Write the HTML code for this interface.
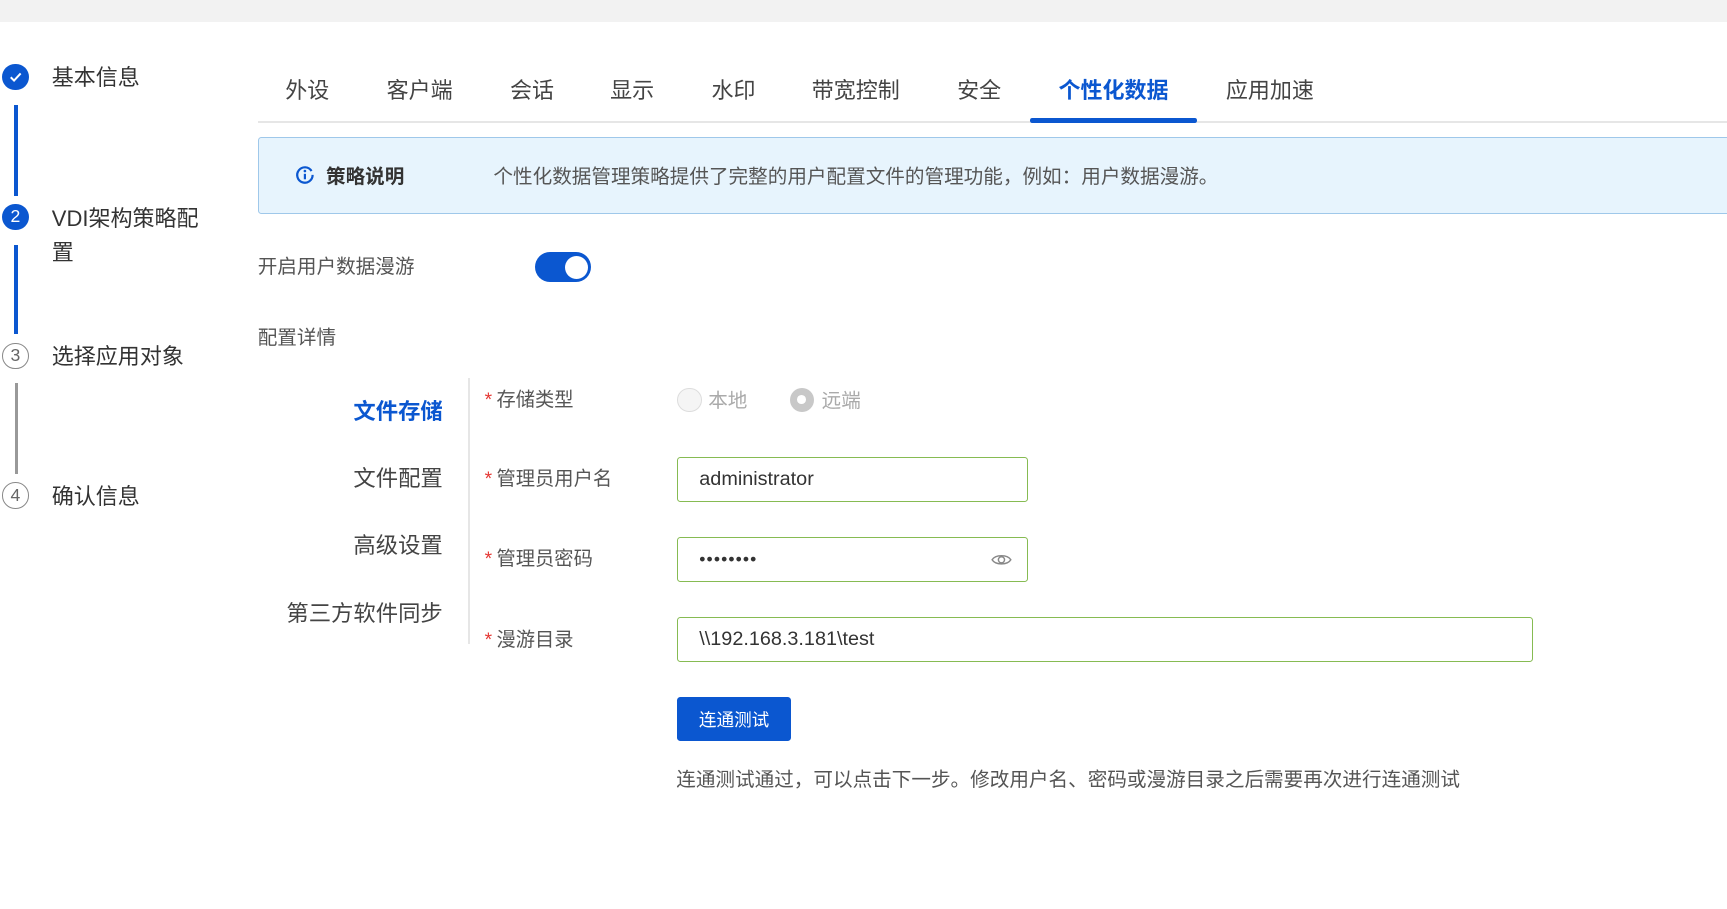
<!DOCTYPE html>
<html><head><meta charset="utf-8"><style>
html,body{margin:0;padding:0;background:#fff;overflow:hidden}
body{width:1568px;height:825px;zoom:1.10140;position:relative;font-family:"Liberation Sans","Noto Sans CJK SC",sans-serif;color:#333}
.a{position:absolute;white-space:nowrap}
.top{left:0;top:0;width:1568px;height:20px;background:#f2f2f2}
.circ{width:24px;height:24px;border-radius:50%;left:2px;box-sizing:border-box;display:flex;align-items:center;justify-content:center;font-size:16px}
.fill{background:#0b57d0;color:#fff}
.out{border:1.5px solid #888;color:#666}
.sl{font-size:20px;color:#333;left:47px;line-height:30px}
.vl{left:13px;width:3px}
.tab{font-size:20px;color:#444;top:69px;line-height:28px}
.f17{font-size:17.8px;color:#555;line-height:24px}
.nav{font-size:20.3px;color:#444;right:1166px;line-height:28px;text-align:right}
.lab{font-size:17.5px;color:#555;left:440px;line-height:24px}
.lab b{color:#e53935;font-weight:normal;margin-right:4px}
.inp{border:1px solid #86bb52;border-radius:3px;box-sizing:border-box;font-size:18px;color:#333;padding-left:19px;display:flex;align-items:center}
</style></head><body>
<div class="a top"></div>

<div class="a circ fill" style="top:58px"><svg width="14" height="14" viewBox="0 0 14 14"><path d="M2.5 7.5l3 3 6-6.5" stroke="#fff" stroke-width="1.8" fill="none"/></svg></div>
<div class="a sl" style="top:55px">基本信息</div>
<div class="a vl" style="top:95px;height:83px;background:#0b57d0"></div>
<div class="a circ fill" style="top:185px">2</div>
<div class="a sl" style="top:183px">VDI架构策略配</div>
<div class="a sl" style="top:214px">置</div>
<div class="a vl" style="top:222px;height:81px;background:#0b57d0"></div>
<div class="a circ out" style="top:311px">3</div>
<div class="a sl" style="top:309px">选择应用对象</div>
<div class="a vl" style="top:348px;height:82px;background:#999;width:2px;left:14px"></div>
<div class="a circ out" style="top:438px">4</div>
<div class="a sl" style="top:436px">确认信息</div>

<div class="a tab" style="left:259px">外设</div>
<div class="a tab" style="left:351px">客户端</div>
<div class="a tab" style="left:463px">会话</div>
<div class="a tab" style="left:554px">显示</div>
<div class="a tab" style="left:646px">水印</div>
<div class="a tab" style="left:737px">带宽控制</div>
<div class="a tab" style="left:869px">安全</div>
<div class="a tab" style="left:961px;color:#0b57d0;font-weight:bold">个性化数据</div>
<div class="a tab" style="left:1113px">应用加速</div>
<div class="a" style="left:234px;top:110px;width:1334px;height:2px;background:#e6e6e6"></div>
<div class="a" style="left:935px;top:107px;width:152px;height:5px;background:#0b57d0;border-radius:2px"></div>

<div class="a" style="left:234px;top:124px;width:1340px;height:70px;box-sizing:border-box;background:#e7f4fd;border:1px solid #9fc8ea;border-radius:3px"></div>
<svg class="a" style="left:268px;top:150px" width="18" height="18" viewBox="0 0 18 18"><path d="M15 5.5A7 7 0 1 0 16 9" stroke="#0b57d0" stroke-width="2" fill="none"/><circle cx="9" cy="5.5" r="1.2" fill="#0b57d0"/><path d="M9 8v5" stroke="#0b57d0" stroke-width="2"/></svg>
<div class="a" style="left:296px;top:149px;font-size:17.8px;font-weight:bold;color:#333;line-height:24px">策略说明</div>
<div class="a f17" style="left:448px;top:149px">个性化数据管理策略提供了完整的用户配置文件的管理功能，例如：用户数据漫游。</div>

<div class="a f17" style="left:234px;top:231px">开启用户数据漫游</div>
<div class="a" style="left:486px;top:229px;width:51px;height:27px;border-radius:14px;background:#0b57d0"></div>
<div class="a" style="left:513px;top:232px;width:21px;height:21px;border-radius:50%;background:#fff"></div>
<div class="a f17" style="left:234px;top:295px">配置详情</div>

<div class="a nav" style="top:360px;color:#0b57d0;font-weight:bold">文件存储</div>
<div class="a nav" style="top:421px">文件配置</div>
<div class="a nav" style="top:482px">高级设置</div>
<div class="a nav" style="top:544px">第三方软件同步</div>
<div class="a" style="left:425px;top:343px;width:2px;height:242px;background:#e6e6e6"></div>

<div class="a lab" style="top:352px"><b>*</b>存储类型</div>
<div class="a lab" style="top:424px"><b>*</b>管理员用户名</div>
<div class="a lab" style="top:497px"><b>*</b>管理员密码</div>
<div class="a lab" style="top:570px"><b>*</b>漫游目录</div>

<div class="a" style="left:615px;top:352px;width:22px;height:22px;border-radius:50%;border:1px solid #ddd;background:#f5f5f5;box-sizing:border-box"></div>
<div class="a" style="left:643px;top:352px;font-size:17.8px;color:#aaa;line-height:24px">本地</div>
<div class="a" style="left:717px;top:352px;width:22px;height:22px;border-radius:50%;background:#c8c8c8"></div>
<div class="a" style="left:724px;top:359px;width:8px;height:8px;border-radius:50%;background:#fff"></div>
<div class="a" style="left:746px;top:352px;font-size:17.8px;color:#aaa;line-height:24px">远端</div>

<div class="a inp" style="left:615px;top:415px;width:318px;height:41px">administrator</div>
<div class="a inp" style="left:615px;top:488px;width:318px;height:40px;letter-spacing:1px;font-size:16px">••••••••</div>
<svg class="a" style="left:900px;top:500px" width="19" height="16" viewBox="0 0 19 16"><path d="M1 8C4 3 15 3 18 8C15 13 4 13 1 8Z" stroke="#888" stroke-width="1.3" fill="none"/><circle cx="9.5" cy="8" r="2.8" stroke="#888" stroke-width="1.3" fill="none"/></svg>
<div class="a inp" style="left:615px;top:560px;width:777px;height:41px">\\192.168.3.181\test</div>

<div class="a" style="left:615px;top:633px;width:103px;height:40px;background:#0b57d0;border-radius:3px;color:#fff;font-size:16px;display:flex;align-items:center;justify-content:center">连通测试</div>
<div class="a f17" style="left:614px;top:696px">连通测试通过，可以点击下一步。修改用户名、密码或漫游目录之后需要再次进行连通测试</div>
</body></html>
